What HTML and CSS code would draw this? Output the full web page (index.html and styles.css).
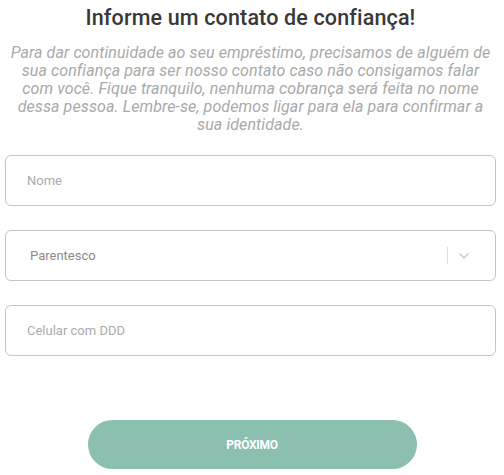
FILE: index.html
```html
<!DOCTYPE html>
<html lang="pt-BR">
<head>
    <meta charset="UTF-8">
    <meta name="viewport" content="width=device-width, initial-scale=1.0">
    <title>Informe um contato de confiança</title>
    <link rel="stylesheet" href="styles.css">
</head>
<body>
    <div class="container">
        <h1>Informe um contato de confiança!</h1>
        <p class="intro">Para dar continuidade ao seu empréstimo, precisamos de alguém de sua confiança para ser nosso contato caso não consigamos falar com você. Fique tranquilo, nenhuma cobrança será feita no nome dessa pessoa. Lembre-se, podemos ligar para ela para confirmar a sua identidade.</p>

        <div class="field">
            <input type="text" placeholder="Nome">
        </div>
        <div class="field select">
            <span class="select-value">Parentesco</span>
            <span class="select-sep"></span>
            <svg class="select-arrow" width="12" height="8" viewBox="0 0 12 8">
                <path d="M1.5 1.5 L6 6 L10.5 1.5" fill="none" stroke="#c8c8c8" stroke-width="1.4"/>
            </svg>
        </div>
        <div class="field">
            <input type="text" placeholder="Celular com DDD">
        </div>

        <div class="actions">
            <button class="btn-next">PRÓXIMO</button>
        </div>
    </div>
</body>
</html>
```

FILE: styles.css
```css
body {
    font-family: Roboto, "Liberation Sans", Arial, sans-serif;
    margin: 5px 8px 0 5px;
    background: #fff;
}
.container {
    display: flex;
    flex-direction: column;
}
h1 {
    margin: 0;
    font-size: 21.5px;
    line-height: 26px;
    font-weight: 500;
    letter-spacing: 0.15px;
    color: #383838;
    text-align: center;
}
.intro {
    margin: 13px 0 0;
    font-size: 16px;
    line-height: 18px;
    font-style: italic;
    letter-spacing: 0.1px;
    color: #a9a9a9;
    text-align: center;
}
.field {
    box-sizing: border-box;
    height: 51px;
    margin-top: 24px;
    border: 1px solid #c4c4c4;
    border-radius: 6px;
    display: flex;
    align-items: center;
}
.intro + .field {
    margin-top: 21px;
}
.field input {
    width: 100%;
    height: 100%;
    box-sizing: border-box;
    border: none;
    background: transparent;
    padding: 0 21px;
    font-family: inherit;
    font-size: 13px;
    color: #555;
    outline: none;
}
.field input::placeholder {
    color: #ababab;
}
.select {
    padding: 0 12px 0 24px;
}
.select-value {
    flex: 1;
    font-size: 13px;
    color: #8a8a8a;
}
.select-sep {
    width: 1px;
    height: 17px;
    background: #dcdcdc;
    margin-right: 10px;
}
.select-arrow {
    margin-right: 13px;
}
.actions {
    display: flex;
    justify-content: center;
    margin-top: 64px;
}
.btn-next {
    width: 329px;
    height: 49px;
    margin-left: 3px;
    border: none;
    border-radius: 25px;
    background: #8bbfb0;
    color: #fff;
    font-family: inherit;
    font-size: 12px;
    font-weight: 700;
    letter-spacing: -0.3px;
    cursor: pointer;
}
```
